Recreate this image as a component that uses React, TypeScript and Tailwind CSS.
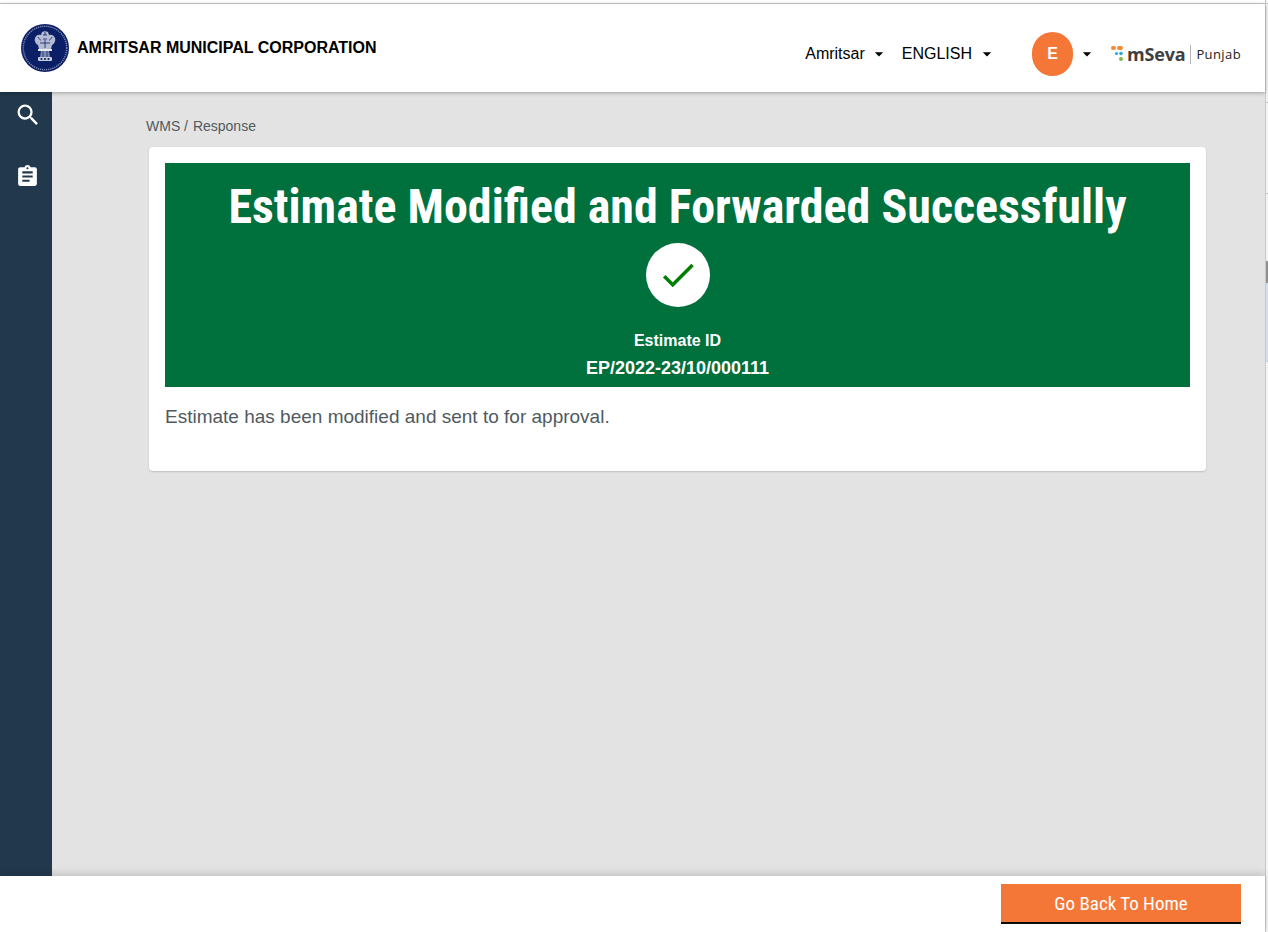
import React from "react";
import { MdSearch, MdAssignment, MdArrowDropDown, MdCheck } from "react-icons/md";

function Emblem() {
  return (
    <svg viewBox="0 0 48 48" className="w-12 h-12 shrink-0">
      <circle cx="24" cy="24" r="24" fill="#0b1f66" />
      <circle cx="24" cy="24" r="21.7" fill="none" stroke="#7f8ab4" strokeWidth="1.5" strokeDasharray="1.2 0.9" />
      <path d="M21 8c2-1 4-1 6 0l1 3c2-1 5 0 6 3 1 3-1 6-3 7l-1 4H18l-1-4c-2-1-4-4-3-7 1-3 4-4 6-3z" fill="#b4bbd3" />
      <path d="M17 13c1 2 2 3 3 3M31 13c-1 2-2 3-3 3M22 11h4M22 15h4M19 19h10M24 8v3M24 16v8" stroke="#0b1f66" strokeWidth="0.8" fill="none" />
      <path d="M17 25h14v2H17z" fill="#e8eaf2" />
      <path d="M20 27h8l1 6H19z" fill="#7f8ab4" />
      <path d="M22 27v6M26 27v6" stroke="#0b1f66" strokeWidth="0.7" />
      <rect x="17" y="33" width="14" height="4" rx="1" fill="#c6cbdd" />
      <circle cx="20.500" cy="35" r="1.100" fill="#0b1f66" />
      <circle cx="24" cy="35" r="1.100" fill="#0b1f66" />
      <circle cx="27.500" cy="35" r="1.100" fill="#0b1f66" />
    </svg>
  );
}

function Logo() {
  return (
    <div className="flex items-center">
      <svg viewBox="0 0 13 16" className="w-[13px] h-[16px] mr-[3px] -mt-[1px]">
        <rect x="0" y="0" width="5" height="4" rx="2" fill="#f58a36" />
        <rect x="6" y="0" width="6" height="4" rx="2" fill="#f58a36" />
        <circle cx="5.500" cy="7.500" r="1.600" fill="#2aa7e0" />
        <circle cx="10" cy="7.500" r="1.800" fill="#2aa7e0" />
        <circle cx="10" cy="13" r="2" fill="#7fb93f" />
      </svg>
      <span className="font-['Open_Sans',sans-serif] text-[18px] leading-none font-bold text-[#3f3f3f] tracking-[-0.2px]">mSeva</span>
      <span className="w-px h-[19px] bg-[#b5b5b5] mx-[5px]" />
      <span className="font-['Open_Sans',sans-serif] text-[13px] leading-none text-[#222] tracking-[0.4px]">Punjab</span>
    </div>
  );
}

function Dropdown({ label, gap }: { label: string; gap: string }) {
  return (
    <div className="flex items-center text-base text-black">
      <span>{label}</span>
      <MdArrowDropDown className={`w-5 h-5 ${gap}`} />
    </div>
  );
}

function Strip() {
  return (
    <div className="w-[3px] h-full bg-[#f4f4f4] border-l border-[#c8c8c8] flex flex-col">
      <div className="h-[3px]" />
      <div className="h-px bg-[#c8c8c8]" />
      <div className="h-[99px] border-b border-[#c8c8c8]" />
      <div className="h-[91px] border-b border-[#c8c8c8]" />
      <div className="h-[67px]" />
      <div className="h-[22px] bg-[#8f8f8f]" />
      <div className="h-[79px] bg-[#d5dfef] border-b border-[#c8c8c8]" />
    </div>
  );
}

export default function App() {
  return (
    <div className="h-[932px] w-[1268px] overflow-hidden flex font-['Liberation_Sans',sans-serif] bg-white">
      <div className="w-[1265px] flex flex-col">
        <div className="h-[4px] bg-white border-b border-[#c8c8c8] shrink-0" />
        <header className="h-[88px] shrink-0 bg-white flex items-center pl-[21px] pr-[24px] relative z-10 shadow-[0_1px_4px_rgba(0,0,0,0.3)]">
          <div className="flex items-center gap-2 -mt-[1px]">
            <Emblem />
            <span className="text-base font-bold text-black mt-[1px]">AMRITSAR MUNICIPAL CORPORATION</span>
          </div>
          <div className="ml-auto flex items-center mt-[12px]">
            <Dropdown label="Amritsar" gap="ml-1" />
            <div className="w-[13px]" />
            <Dropdown label="ENGLISH" gap="ml-[5px]" />
            <div className="w-[35px]" />
            <div className="w-[41px] h-[44px] rounded-full bg-[#f47738] flex items-center justify-center text-white font-bold text-base">E</div>
            <MdArrowDropDown className="w-5 h-5 ml-1 text-black" />
            <div className="w-[14px]" />
            <Logo />
          </div>
        </header>
        <div className="flex flex-1 min-h-0">
          <aside className="w-[52px] bg-[#22394d] shrink-0 flex flex-col items-start pl-[14px] pt-[9px] text-white">
            <MdSearch className="w-7 h-7" />
            <MdAssignment className="w-[25px] h-[25px] mt-[35px] ml-px" />
          </aside>
          <main className="flex-1 bg-[#e3e3e3] pl-[94px] pt-[26px] pr-[59px]">
            <div className="text-sm leading-4 text-[#505a5f]">WMS / <span className="ml-[1px]">Response</span></div>
            <section className="mt-[13px] ml-[3px] bg-white rounded-[4px] shadow-[0_1px_2px_rgba(0,0,0,0.16)] p-4 h-[324px]">
              <div className="h-[224px] bg-[#00703c] flex flex-col items-center text-white">
                <h1 className="font-['Roboto',sans-serif] font-bold text-[48px] leading-[56px] mt-[16px] [font-stretch:75%]">Estimate Modified and Forwarded Successfully</h1>
                <div className="w-16 h-16 rounded-full bg-white mt-[8px] flex items-center justify-center">
                  <MdCheck className="w-[42px] h-[42px] -mt-px text-[#008000]" />
                </div>
                <div className="text-base leading-6 font-bold mt-[22px]">Estimate ID</div>
                <div className="text-lg leading-6 font-bold mt-[3px]">EP/2022-23/10/000111</div>
              </div>
              <p className="mt-[18px] text-[19px] leading-6 text-[#505a5f]">Estimate has been modified and sent to for approval.</p>
            </section>
          </main>
        </div>
        <footer className="h-[56px] shrink-0 bg-white relative z-10 shadow-[0_-2px_8px_rgba(0,0,0,0.16)] flex justify-end pt-2 pr-[24px]">
          <button className="w-[240px] h-10 pt-[2px] bg-[#f47738] border-b-2 border-[#0b0c0c] text-white font-['Roboto',sans-serif] text-[19px] leading-6 [font-stretch:75%]">Go Back To Home</button>
        </footer>
      </div>
      <Strip />
    </div>
  );
}
